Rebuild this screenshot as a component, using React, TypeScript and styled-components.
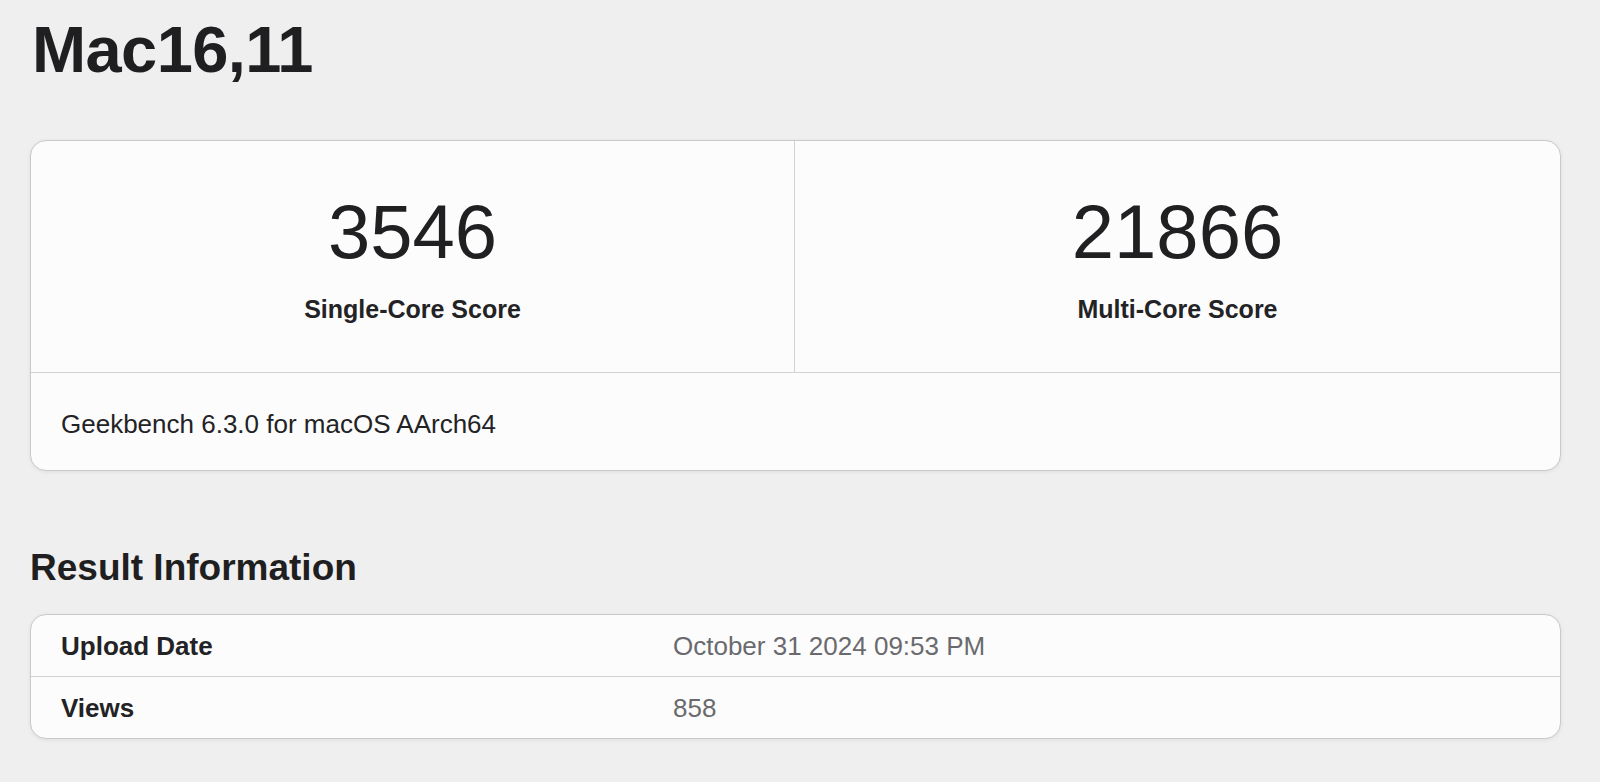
import React from "react";
import styled, { createGlobalStyle } from "styled-components";

const GlobalStyle = createGlobalStyle`
  html, body {
    margin: 0;
    padding: 0;
    background: #efefef;
  }
  body {
    font-family: "Liberation Sans", Arial, Helvetica, sans-serif;
    color: #1f1f21;
    -webkit-font-smoothing: antialiased;
  }
`;

const Page = styled.div`
  width: 1531px;
  margin-left: 30px;
  padding-top: 17px;
  padding-bottom: 40px;
`;

const Title = styled.h1`
  margin: 0 0 58px 2px;
  font-size: 65px;
  line-height: 65px;
  font-weight: 700;
  letter-spacing: -0.6px;
`;

const Card = styled.div`
  background: #fcfcfc;
  border: 1px solid #c9c9c9;
  border-radius: 16px;
  box-shadow: 0 1px 4px rgba(0, 0, 0, 0.07);
  overflow: hidden;
`;

const ScoreRow = styled.div`
  display: grid;
  grid-template-columns: 763px 1fr;
  border-bottom: 1px solid #d2d2d2;
`;

const ScoreCell = styled.div`
  padding: 53px 0 50px;
  text-align: center;
  & + & {
    border-left: 1px solid #d2d2d2;
  }
`;

const ScoreValue = styled.div`
  font-size: 76px;
  line-height: 76px;
  font-weight: 400;
  color: #202022;
`;

const ScoreLabel = styled.div`
  margin-top: 27px;
  font-size: 25px;
  line-height: 25px;
  font-weight: 700;
  color: #232325;
`;

const CardFooter = styled.div`
  padding: 38px 30px 33px;
  font-size: 26px;
  line-height: 26px;
  color: #232325;
`;

const SectionTitle = styled.h2`
  margin: 78px 0 27px 0;
  font-size: 37px;
  line-height: 38px;
  font-weight: 700;
`;

const InfoRow = styled.div`
  display: grid;
  grid-template-columns: 612px 1fr;
  padding: 18px 30px 17px;
  font-size: 26px;
  line-height: 26px;
  & + & {
    border-top: 1px solid #d2d2d2;
  }
`;

const InfoName = styled.div`
  font-weight: 700;
  color: #232325;
`;

const InfoValue = styled.div`
  color: #6a6a6e;
`;

const scores = [
  { value: "3546", label: "Single-Core Score" },
  { value: "21866", label: "Multi-Core Score" },
];

const info = [
  { name: "Upload Date", value: "October 31 2024 09:53 PM" },
  { name: "Views", value: "858" },
];

const App: React.FC = () => {
  return (
    <>
      <GlobalStyle />
      <Page>
        <Title>Mac16,11</Title>
        <Card>
          <ScoreRow>
            {scores.map((s) => (
              <ScoreCell key={s.label}>
                <ScoreValue>{s.value}</ScoreValue>
                <ScoreLabel>{s.label}</ScoreLabel>
              </ScoreCell>
            ))}
          </ScoreRow>
          <CardFooter>Geekbench 6.3.0 for macOS AArch64</CardFooter>
        </Card>

        <SectionTitle>Result Information</SectionTitle>
        <Card>
          {info.map((row) => (
            <InfoRow key={row.name}>
              <InfoName>{row.name}</InfoName>
              <InfoValue>{row.value}</InfoValue>
            </InfoRow>
          ))}
        </Card>
      </Page>
    </>
  );
};

export default App;
